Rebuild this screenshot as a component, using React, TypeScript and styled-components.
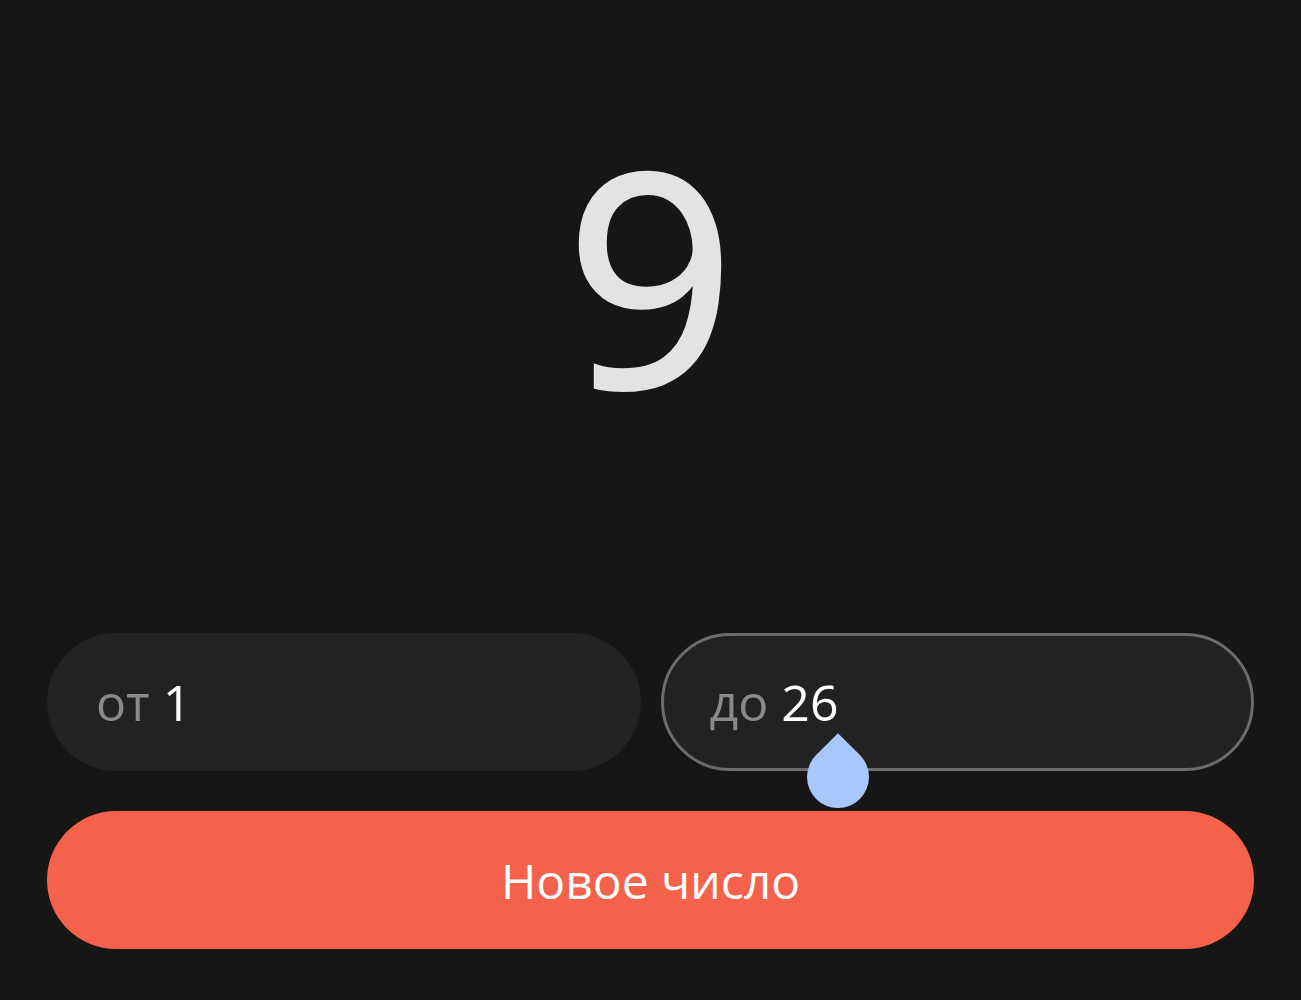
import React from "react";
import styled, { createGlobalStyle } from "styled-components";

const GlobalStyle = createGlobalStyle`
  html, body {
    margin: 0;
    padding: 0;
    background: #161616;
  }
  body {
    font-family: "Open Sans", "Noto Sans", sans-serif;
    color: #ffffff;
  }
`;

const App = () => {
  return (
    <>
      <GlobalStyle />
      <Main>
        <Display>9</Display>

        <RangeRow>
          <Field>
            <Prefix>от</Prefix>
            <Value>1</Value>
          </Field>
          <Field $focused>
            <Prefix>до</Prefix>
            <Value>
              26
              <CaretHandle />
            </Value>
          </Field>
        </RangeRow>

        <GenerateButton type="button">Новое число</GenerateButton>
      </Main>
    </>
  );
};

export default App;

const Main = styled.main`
  display: flex;
  flex-direction: column;
  height: 1000px;
  padding: 0 47px;
  box-sizing: border-box;
`;

const Display = styled.div`
  height: 633px;
  padding-top: 125px;
  box-sizing: border-box;
  text-align: center;
  font-size: 296px;
  line-height: 1;
  color: #e3e3e3;
  -webkit-text-stroke: 4px #e3e3e3;
`;

const RangeRow = styled.div`
  display: grid;
  grid-template-columns: 1fr 1fr;
  gap: 20px;
`;

const Field = styled.label<{ $focused?: boolean }>`
  display: flex;
  align-items: center;
  gap: 13px;
  height: 138px;
  padding: 0 46px;
  box-sizing: border-box;
  border-radius: 69px;
  background: #222222;
  border: 3px solid ${(p) => (p.$focused ? "#6c6c6c" : "transparent")};
  font-size: 50px;
`;

const Prefix = styled.span`
  color: #8a8a8a;
`;

const Value = styled.span`
  position: relative;
  color: #ffffff;
`;

/* text selection handle under the caret */
const CaretHandle = styled.span`
  position: absolute;
  left: 100%;
  top: calc(100% + 10px);
  width: 62px;
  height: 62px;
  margin-left: -32px;
  background: #a8c7fa;
  border-radius: 0 50% 50% 50%;
  transform: rotate(45deg);
`;

const GenerateButton = styled.button`
  margin-top: 40px;
  height: 138px;
  border: none;
  border-radius: 69px;
  background: #f4624b;
  color: #ffffff;
  font-family: "Open Sans", "Noto Sans", sans-serif;
  font-size: 48px;
  cursor: pointer;
`;
